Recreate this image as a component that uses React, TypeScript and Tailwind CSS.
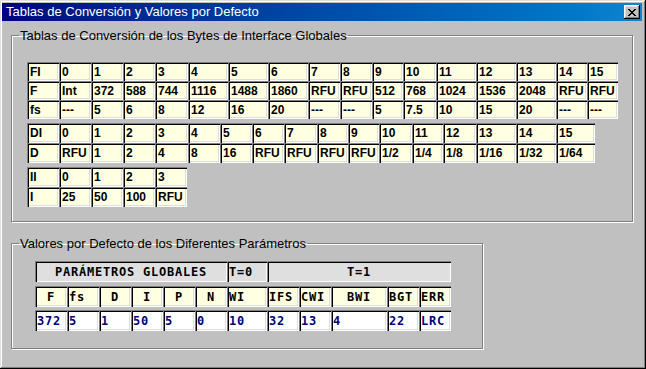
import React from "react"

type Col = { w: string; v: string[] }

const sunk =
  "shadow-[inset_1px_1px_#808080,inset_2px_2px_#000,inset_-1px_-1px_#fff,inset_-2px_-2px_#dfdfdf]"

const fiTable: Col[] = [
  { w: "w-[32px]", v: ["FI", "F", "fs"] },
  { w: "w-[32px]", v: ["0", "Int", "---"] },
  { w: "w-[32px]", v: ["1", "372", "5"] },
  { w: "w-[32px]", v: ["2", "588", "6"] },
  { w: "w-[33px]", v: ["3", "744", "8"] },
  { w: "w-[40px]", v: ["4", "1116", "12"] },
  { w: "w-[40px]", v: ["5", "1488", "16"] },
  { w: "w-[40px]", v: ["6", "1860", "20"] },
  { w: "w-[32px]", v: ["7", "RFU", "---"] },
  { w: "w-[32px]", v: ["8", "RFU", "---"] },
  { w: "w-[31px]", v: ["9", "512", "5"] },
  { w: "w-[33px]", v: ["10", "768", "7.5"] },
  { w: "w-[40px]", v: ["11", "1024", "10"] },
  { w: "w-[40px]", v: ["12", "1536", "15"] },
  { w: "w-[40px]", v: ["13", "2048", "20"] },
  { w: "w-[31px]", v: ["14", "RFU", "---"] },
  { w: "w-[31px]", v: ["15", "RFU", "---"] },
]

const diTable: Col[] = [
  { w: "w-[32px]", v: ["DI", "D"] },
  { w: "w-[32px]", v: ["0", "RFU"] },
  { w: "w-[32px]", v: ["1", "1"] },
  { w: "w-[32px]", v: ["2", "2"] },
  { w: "w-[33px]", v: ["3", "4"] },
  { w: "w-[32px]", v: ["4", "8"] },
  { w: "w-[32px]", v: ["5", "16"] },
  { w: "w-[32px]", v: ["6", "RFU"] },
  { w: "w-[33px]", v: ["7", "RFU"] },
  { w: "w-[31px]", v: ["8", "RFU"] },
  { w: "w-[31px]", v: ["9", "RFU"] },
  { w: "w-[33px]", v: ["10", "1/2"] },
  { w: "w-[31px]", v: ["11", "1/4"] },
  { w: "w-[33px]", v: ["12", "1/8"] },
  { w: "w-[40px]", v: ["13", "1/16"] },
  { w: "w-[40px]", v: ["14", "1/32"] },
  { w: "w-[39px]", v: ["15", "1/64"] },
]

const iiTable: Col[] = [
  { w: "w-[32px]", v: ["II", "I"] },
  { w: "w-[32px]", v: ["0", "25"] },
  { w: "w-[32px]", v: ["1", "50"] },
  { w: "w-[32px]", v: ["2", "100"] },
  { w: "w-[32px]", v: ["3", "RFU"] },
]

// label, value, width, centred label?
const params: [string, string, string, boolean][] = [
  ["F", "372", "w-[32px]", true],
  ["fs", "5", "w-[32px]", false],
  ["D", "1", "w-[32px]", true],
  ["I", "50", "w-[32px]", true],
  ["P", "5", "w-[32px]", true],
  ["N", "0", "w-[32px]", true],
  ["WI", "10", "w-[40px]", false],
  ["IFS", "32", "w-[32px]", false],
  ["CWI", "13", "w-[32px]", false],
  ["BWI", "4", "w-[56px]", true],
  ["BGT", "22", "w-[32px]", false],
  ["ERR", "LRC", "w-[32px]", false],
]

const ConvTable = ({ cols, rowH }: { cols: Col[]; rowH: string }) => (
  <div className="flex flex-col">
    {cols[0].v.map((_, r) => (
      <div key={r} className="flex">
        {cols.map((c, i) => (
          <div
            key={i}
            className={`${c.w} ${rowH} ${sunk} bg-[#ffffe1] flex items-center pl-[3px] text-[12px] font-bold text-black whitespace-nowrap`}
          >
            {c.v[r]}
          </div>
        ))}
      </div>
    ))}
  </div>
)

const GroupBox = ({
  title,
  className,
  children,
}: {
  title: string
  className: string
  children: React.ReactNode
}) => (
  <fieldset
    className={`border border-[#808080] shadow-[inset_1px_1px_#fff,1px_1px_#fff] min-w-0 ${className}`}
  >
    <legend className="ml-[7px] px-[1px] text-[13px] leading-[15px] text-black">
      {title}
    </legend>
    {children}
  </fieldset>
)

const App: React.FC = () => {
  return (
    <div className="w-[646px] h-[369px] bg-[#c0c0c0] pt-[3px] pl-[2px] pr-[4px] pb-[4px] flex flex-col font-['Liberation_Sans',Arial,sans-serif] shadow-[inset_-1px_-1px_#000,inset_1px_1px_#dfdfdf,inset_-2px_-2px_#808080,inset_2px_2px_#fff]">
      <div className="h-[18px] flex items-center justify-between bg-linear-to-r from-[#000080] to-[#1084d0] pl-[4px] pr-[2px]">
        <span className="text-white text-[13px] leading-[18px]">
          Tablas de Conversión y Valores por Defecto
        </span>
        <button className="w-[16px] h-[14px] bg-[#c0c0c0] flex items-center justify-center shadow-[inset_-1px_-1px_#000,inset_1px_1px_#fff,inset_-2px_-2px_#808080,inset_2px_2px_#dfdfdf]">
          <svg width="8" height="7" viewBox="0 0 8 7" shapeRendering="crispEdges">
            <path
              fill="#000"
              d="M0 0h2v1H0zM6 0h2v1H6zM1 1h2v1H1zM5 1h2v1H5zM2 2h4v1H2zM3 3h2v1H3zM2 4h4v1H2zM1 5h2v1H1zM5 5h2v1H5zM0 6h2v1H0zM6 6h2v1H6z"
            />
          </svg>
        </button>
      </div>

      <div className="pl-[9px] pt-[7px] flex flex-col">
        <GroupBox
          title="Tablas de Conversión de los Bytes de Interface Globales"
          className="w-[622px]"
        >
          <div className="pl-[15px] pt-[19px] pb-[14px] flex flex-col gap-[4px]">
            <ConvTable cols={fiTable} rowH="h-[19px]" />
            <ConvTable cols={diTable} rowH="h-[20px]" />
            <ConvTable cols={iiTable} rowH="h-[20px]" />
          </div>
        </GroupBox>

        <GroupBox
          title="Valores por Defecto de los Diferentes Parámetros"
          className="w-[472px] mt-[14px]"
        >
          <div className="pl-[23px] pt-[10px] pb-[17px] flex flex-col font-['DejaVu_Sans_Mono',monospace] font-bold text-[12px] tracking-[0.78px]">
            <div className="flex">
              <div className={`w-[192px] h-[21px] ${sunk} bg-[#dfdfdf] flex items-center justify-center`}>
                PARÁMETROS GLOBALES
              </div>
              <div className={`w-[40px] h-[21px] ${sunk} bg-[#dfdfdf] flex items-center pl-[2px]`}>
                T=0
              </div>
              <div className={`w-[184px] h-[21px] ${sunk} bg-[#dfdfdf] flex items-center justify-center`}>
                T=1
              </div>
            </div>
            <div className="flex mt-[4px]">
              {params.map(([label, , w, centred]) => (
                <div
                  key={label}
                  className={`${w} h-[21px] ${sunk} bg-[#ffffe1] flex items-center text-black ${
                    centred ? "justify-center" : "pl-[2px]"
                  }`}
                >
                  {label}
                </div>
              ))}
            </div>
            <div className="flex mt-[3px]">
              {params.map(([label, value, w]) => (
                <div
                  key={label}
                  className={`${w} h-[21px] ${sunk} bg-white flex items-center pl-[2px] text-[#000080]`}
                >
                  {value}
                </div>
              ))}
            </div>
          </div>
        </GroupBox>
      </div>
    </div>
  )
}

export default App
